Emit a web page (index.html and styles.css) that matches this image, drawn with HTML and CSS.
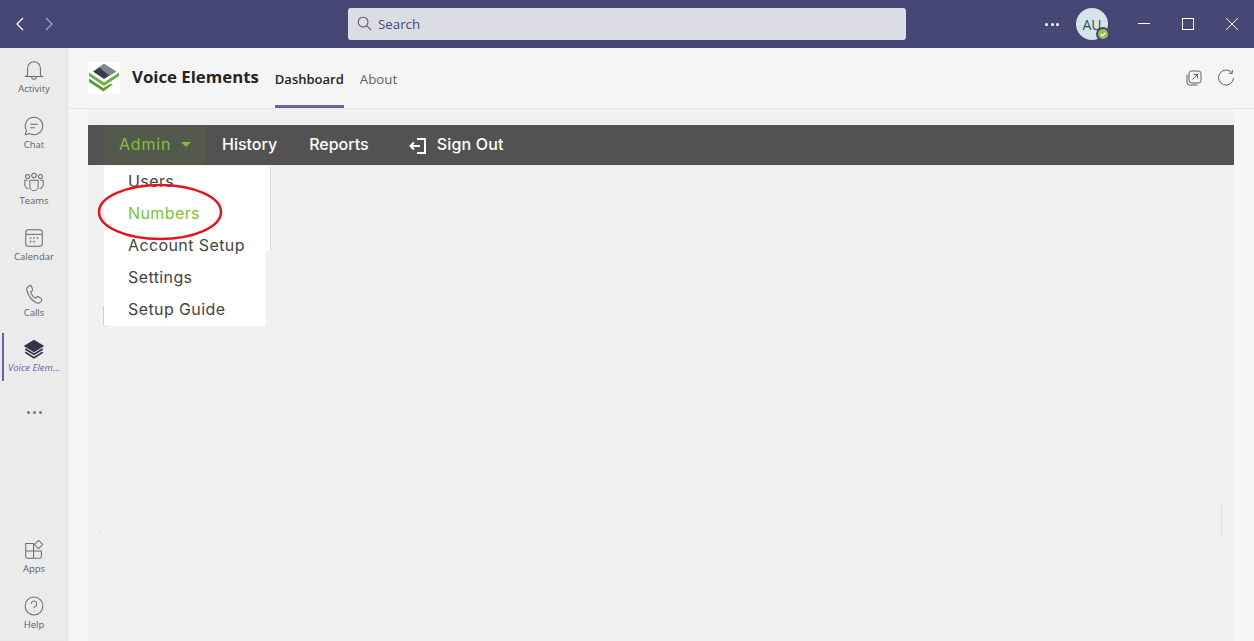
FILE: index.html
```html
<!DOCTYPE html>
<html lang="en">
<head>
<meta charset="utf-8">
<title>Voice Elements</title>
<link rel="stylesheet" href="styles.css">
</head>
<body>
<header class="titlebar">
  <div class="history">
    <svg class="hist-icon" viewBox="0 0 12 16"><path d="M9 2 3 8l6 6"/></svg>
    <svg class="hist-icon dim" viewBox="0 0 12 16"><path d="m3 2 6 6-6 6"/></svg>
  </div>
  <div class="search">
    <svg class="search-icon" viewBox="0 0 16 16"><circle cx="6.5" cy="6.5" r="5.2"/><path d="m10.3 10.3 4.7 4.7"/></svg>
    <span>Search</span>
  </div>
  <div class="title-right">
    <div class="dots"><i></i><i></i><i></i></div>
    <div class="avatar">AU
      <span class="presence"><svg viewBox="0 0 8 8"><path d="m2 4 1.5 1.5L6 3"/></svg></span>
    </div>
    <div class="winctl">
      <svg viewBox="0 0 14 14"><path d="M1 6.500h12"/></svg>
      <svg viewBox="0 0 14 14"><rect x="1.500" y="1.500" width="11" height="11"/></svg>
      <svg viewBox="0 0 14 14"><path d="m1 1 12 12M13 1 1 13"/></svg>
    </div>
  </div>
</header>
<div class="app">
  <nav class="rail">
    <div class="rail-item">
      <svg viewBox="0 0 24 24"><path d="M5 17.500V10a7 7 0 0 1 14 0v7.500l2 1.500H3zM9.500 19.500a2.500 2.500 0 0 0 5 0"/></svg>
      <span>Activity</span>
    </div>
    <div class="rail-item">
      <svg viewBox="0 0 24 24"><path d="M12 2.500a9.500 9.500 0 1 1-4.600 17.800L2.500 21.500l1.300-4.700A9.500 9.500 0 0 1 12 2.500zM8 10h8M8 14h5"/></svg>
      <span>Chat</span>
    </div>
    <div class="rail-item">
      <svg viewBox="0 0 24 24"><circle cx="5" cy="6" r="2.200"/><circle cx="12" cy="5" r="2.500"/><circle cx="19" cy="6" r="2.200"/><path d="M7.500 10h9v7a4.500 4.500 0 0 1-9 0zM5 10H2v5a4 4 0 0 0 4 4M19 10h3v5a4 4 0 0 1-4 4"/></svg>
      <span>Teams</span>
    </div>
    <div class="rail-item">
      <svg viewBox="0 0 24 24"><rect x="3" y="3" width="18" height="18" rx="3"/><path d="M3 8h18"/><path class="dotted" d="M7.500 12h1.500M11.300 12h1.500M15 12h1.500M7.500 16h1.500M11.300 16h1.500"/></svg>
      <span>Calendar</span>
    </div>
    <div class="rail-item">
      <svg viewBox="0 0 24 24"><path d="M8.500 2.500 5.500 4C4 5 4 7 4.500 9c1.500 5 5 10 10 12.500 2 .8 4 .2 5-1l1-1.500c.3-.8 0-1.500-.7-2l-3-2c-.8-.4-1.500-.2-2 .4l-1 1.300c-2.500-1.200-4.500-4-5.500-7l1.500-1c.6-.5.800-1.200.5-2l-1-3c-.3-.7-1-1-1.800-.7z"/></svg>
      <span>Calls</span>
    </div>
    <div class="rail-item active">
      <svg class="stack" viewBox="0 0 24 24"><path class="solid" d="M12 3l9.500 5.800L12 14.500 2.500 8.800z"/><path d="M2.500 12 12 17.800 21.500 12M2.500 15.500 12 21.500l9.500-6"/></svg>
      <span>Voice Elem...</span>
    </div>
    <div class="rail-more"><i></i><i></i><i></i></div>
    <div class="rail-spacer"></div>
    <div class="rail-item">
      <svg viewBox="0 0 24 24"><path d="M3 5h8.500v16H5a2 2 0 0 1-2-2zM3 13h17v6a2 2 0 0 1-2 2h-6.500v-8"/><path d="m17 1.500 4.500 4.500-4.500 4.500L12.500 6z"/></svg>
      <span>Apps</span>
    </div>
    <div class="rail-item">
      <svg viewBox="0 0 24 24"><circle cx="12" cy="12" r="9.700"/><path d="M9 9.500a3 3 0 1 1 4.500 2.600c-1 .6-1.500 1.200-1.500 2.400M12 17v.8"/></svg>
      <span>Help</span>
    </div>
  </nav>
  <div class="content">
    <div class="tabhead">
      <div class="logo">
        <svg viewBox="0 0 32 32">
          <path fill="#3c3c48" d="M16 2 28 9.500 16 17 5 9.500z"/>
          <path fill="#85858f" d="M16 2 28 9.500 21 13.500 11 5z"/>
          <path fill="#6fae40" d="M1 10.500 16 20.500 31 10.500v3.500L16 24 1 14z"/>
          <path fill="#5a9a32" d="M1 16.500 15.500 26 22 22l3 0-9.500 7.500L1 20z"/>
        </svg>
      </div>
      <div class="appname">Voice Elements</div>
      <div class="tab selected">Dashboard</div>
      <div class="tab">About</div>
      <div class="head-actions">
        <svg viewBox="0 0 18 18"><rect x="4" y="2" width="12" height="12" rx="2.500"/><path d="M2 5.500v8A2.500 2.500 0 0 0 4.500 16h8M7.500 10.500l5-5M8.500 5.500h4v4"/></svg>
        <svg viewBox="0 0 18 18"><path d="M14.800 3.800A7.500 7.500 0 1 0 16.500 9M15.300 1v3.300H12"/></svg>
      </div>
    </div>
    <main class="main">
      <div class="navbar">
        <div class="nav-item admin">Admin<span class="caret"></span></div>
        <div class="nav-item">History</div>
        <div class="nav-item">Reports</div>
        <div class="nav-item signout">
          <svg viewBox="0 0 18 16"><path d="M8 1h8v14H8M1 8h10M5 4.500 1.500 8 5 11.500"/></svg>
          Sign Out
        </div>
      </div>
      <div class="menu-back"></div>
      <div class="menu-edge"></div>
      <ul class="menu">
        <li>Users</li>
        <li class="current">Numbers</li>
        <li>Account Setup</li>
        <li>Settings</li>
        <li>Setup Guide</li>
      </ul>
      <svg class="annotation" viewBox="0 0 128 60"><ellipse cx="64" cy="30" rx="61" ry="27"/></svg>
      <div class="speck"></div>
      <div class="scrollmark"></div>
    </main>
  </div>
</div>
</body>
</html>
```
FILE: styles.css
```css
* { box-sizing: border-box; }
html, body { margin: 0; height: 100%; overflow: hidden; }
body {
  width: 1254px;
  height: 641px;
  display: flex;
  flex-direction: column;
  font-family: "Open Sans", "Noto Sans", sans-serif;
  background: #f5f5f5;
  color: #252423;
}
.titlebar {
  height: 48px;
  flex: none;
  background: #464775;
  display: flex;
  align-items: center;
  position: relative;
}
.history { display: flex; gap: 17px; padding-left: 14px; }
.hist-icon { width: 12px; height: 16px; fill: none; stroke: #fff; stroke-width: 1.200; }
.hist-icon.dim { stroke: #a3a4c0; }
.search {
  margin-left: 293px;
  width: 558px;
  height: 32px;
  background: #dbdce6;
  border-radius: 3px;
  display: flex;
  align-items: center;
  gap: 6px;
  padding-left: 9px;
  padding-bottom: 1px;
  font-size: 13.300px;
  color: #464775;
}
.search-icon { width: 15px; height: 15px; fill: none; stroke: #55556a; stroke-width: 1.100; }
.title-right { margin-left: auto; display: flex; align-items: center; }
.dots { display: flex; gap: 2.500px; margin-right: 17px; }
.dots i { width: 3px; height: 3px; background: #fff; border-radius: 50%; }
.avatar {
  position: relative;
  width: 32px;
  height: 32px;
  border-radius: 50%;
  background: #d6e3e8;
  color: #2f5060;
  font-size: 14px;
  display: flex;
  align-items: center;
  justify-content: center;
}
.presence {
  position: absolute;
  right: -2px;
  bottom: -1px;
  width: 14px;
  height: 14px;
  border-radius: 50%;
  background: #92c353;
  border: 2px solid #464775;
  display: flex;
}
.presence svg { width: 10px; height: 10px; fill: none; stroke: #fff; stroke-width: 1; }
.winctl { display: flex; gap: 30px; margin-left: 29px; margin-right: 15px; }
.winctl svg { width: 14px; height: 14px; fill: none; stroke: #fff; stroke-width: 1; }
.app { flex: 1; display: flex; min-height: 0; }
.rail {
  width: 68px;
  flex: none;
  background: #ebebeb;
  box-shadow: inset -3px 0 4px -3px #d8d8d8;
  display: flex;
  flex-direction: column;
  padding-top: 1px;
}
.rail-item {
  height: 56px;
  flex: none;
  display: flex;
  flex-direction: column;
  align-items: center;
  justify-content: center;
  gap: 1px;
  font-size: 9.500px;
  color: #616161;
  line-height: 13px;
  position: relative;
}
.rail-item svg { width: 22px; height: 22px; fill: none; stroke: #6a6a6a; stroke-width: 1.100; }
.rail-item .dotted { stroke-width: 1.800; }
.rail-item.active { color: #6264a7; font-style: italic; height: 48px; margin: 4px 0; padding-bottom: 2px; }
.rail-item.active::before {
  content: "";
  position: absolute;
  left: 2px;
  top: 0;
  bottom: 0;
  width: 2px;
  background: #6264a7;
}
.rail-item .stack { stroke: #33344a; stroke-width: 1.800; }
.rail-item .solid { fill: #33344a; }
.rail-more { display: flex; justify-content: center; gap: 3px; height: 56px; padding-top: 26px; }
.rail-more i { width: 3px; height: 3px; border-radius: 50%; background: #777; }
.rail-spacer { flex: 1; margin-bottom: -2px; }
.content { flex: 1; display: flex; flex-direction: column; min-width: 0; }
.tabhead {
  height: 61px;
  flex: none;
  display: flex;
  align-items: stretch;
  border-bottom: 1px solid #e8e8e8;
  padding-left: 20px;
}
.logo {
  width: 32px;
  height: 32px;
  margin-top: 14px;
  background: #fff;
  border-radius: 2px;
  display: flex;
}
.logo svg { width: 32px; height: 32px; }
.appname {
  margin-left: 12px;
  font-size: 16.800px;
  font-weight: 700;
  line-height: 60px;
  height: 60px;
  color: #252423;
  position: relative;
  top: -1px;
}
.tab {
  margin-left: 16px;
  font-size: 13.300px;
  line-height: 62px;
  color: #616161;
  height: 60px;
}
.tab.selected {
  color: #252423;
  font-weight: 600;
  font-size: 13px;
  border-bottom: 3px solid #6264a7;
}
.head-actions { margin-left: auto; display: flex; gap: 14px; align-items: center; margin-right: 19px; }
.head-actions svg { width: 18px; height: 18px; fill: none; stroke: #616161; stroke-width: 1; }
.main { flex: 1; position: relative; padding: 16px 20px 0; }
.main::before {
  content: "";
  position: absolute;
  left: 20px;
  right: 20px;
  top: 0;
  bottom: 0;
  background: #f1f1f1;
}
.navbar {
  position: relative;
  height: 40px;
  background: #525252;
  display: flex;
  align-items: center;
  padding-left: 15px;
  color: #fff;
  font-family: "Inter", sans-serif;
  font-size: 16px;
  font-weight: 500;
}
.nav-item { padding: 0 16px; height: 40px; line-height: 39px; white-space: nowrap; }
.nav-item.admin {
  width: 103px;
  background: #54594e;
  color: #7ec03c;
  padding-right: 0;
  padding-bottom: 1px;
  display: flex;
  align-items: center;
  font-weight: 400;
  letter-spacing: 0.8px;
}
.caret {
  margin-left: 10px;
  border-left: 5px solid transparent;
  border-right: 5px solid transparent;
  border-top: 5px solid #7ec03c;
}
.nav-item.signout { display: flex; align-items: center; gap: 10px; margin-left: 8px; padding-bottom: 1px; letter-spacing: 0.2px; }
.signout svg { width: 18px; height: 16px; fill: none; stroke: #fff; stroke-width: 2; margin-top: 3px; }
.menu-back {
  position: absolute;
  left: 36px;
  top: 57px;
  width: 167px;
  height: 85px;
  background: #fff;
  border-right: 1px solid #e0e0e0;
  border-radius: 3px 3px 0 0;
}
.menu-edge {
  position: absolute;
  left: 35px;
  top: 197px;
  width: 6px;
  height: 21px;
  border-left: 1px solid #cfcfcf;
  border-bottom: 1px solid #e4e4e4;
  border-radius: 0 0 0 3px;
}
.menu {
  position: absolute;
  left: 36px;
  top: 57px;
  width: 162px;
  height: 160px;
  margin: 0;
  padding: 0;
  list-style: none;
  background: #fff;
  border-radius: 3px;
  font-family: "Inter", sans-serif;
  font-size: 16px;
  letter-spacing: 0.4px;
  color: #454545;
}
.menu li { height: 32px; line-height: 31px; padding-left: 24px; white-space: nowrap; }
.menu li.current { color: #7ec03c; }
.annotation {
  position: absolute;
  left: 28px;
  top: 73px;
  width: 128px;
  height: 60px;
  fill: none;
  stroke: #e6141f;
  stroke-width: 2.500;
}
.speck {
  position: absolute;
  left: 32px;
  top: 422px;
  width: 1px;
  height: 4px;
  background: #dcdcdc;
}
.scrollmark {
  position: absolute;
  left: 1153px;
  top: 393px;
  width: 1px;
  height: 32px;
  background: #dcdcdc;
}
```
